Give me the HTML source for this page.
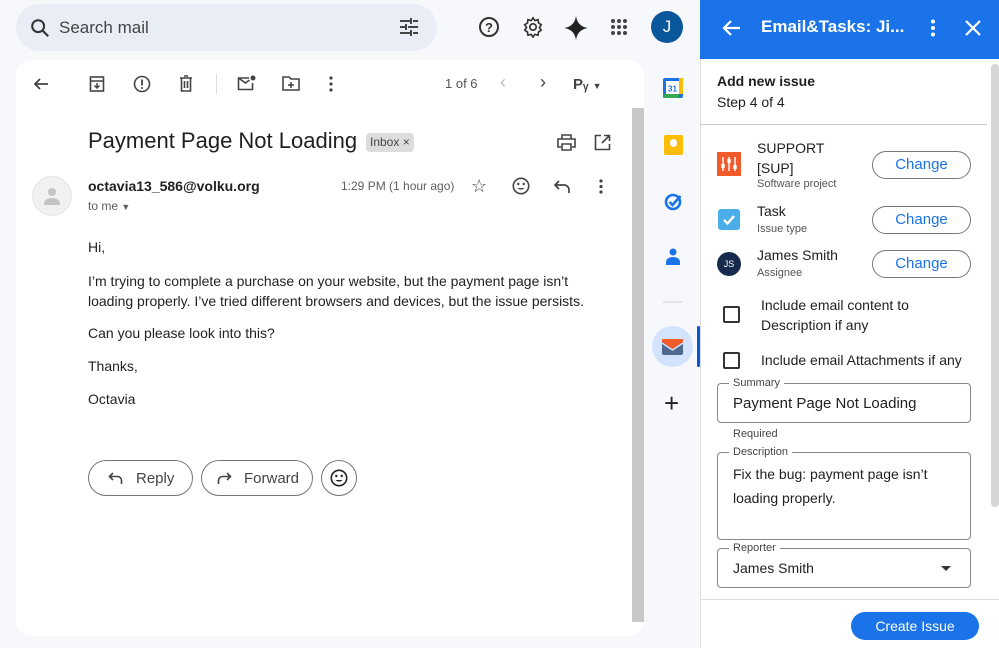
<!DOCTYPE html>
<html><head><meta charset="utf-8"><style>
*{box-sizing:border-box;margin:0;padding:0}
body{width:999px;height:648px;overflow:hidden;background:#f6f8fc;font-family:"Liberation Sans",Arial,sans-serif;position:relative;color:#1f1f1f}
.abs{position:absolute}
svg{display:block}
.ico{position:absolute}
.body p{font-size:14px;color:#222;line-height:20px}
.btn{position:absolute;border:1px solid #747775;border-radius:18px;height:36px;font-size:15px;color:#444;display:flex;align-items:center}
.chg{position:absolute;left:872px;width:99px;height:28px;border:1px solid #777;border-radius:14px;color:#1a73e8;font-size:15px;text-align:center;line-height:26px}
.fld{position:absolute;left:717px;width:254px;border:1px solid #888;border-radius:4px}
.fld .lb{position:absolute;top:-7px;left:11px;background:#fff;padding:0 4px;font-size:11px;color:#444;line-height:12px}
.fld .v{position:absolute;left:15px;font-size:15px;color:#222}
.cb{position:absolute;left:723px;width:17px;height:17px;border:2px solid #333;border-radius:2px}
</style></head><body>
<!-- search -->
<div class="abs" style="left:16px;top:4px;width:421px;height:47px;border-radius:24px;background:#e9eef6"></div>
<svg class="ico" style="left:29px;top:17px" width="22" height="22" viewBox="0 0 24 24"><circle cx="10" cy="10" r="6.5" fill="none" stroke="#333" stroke-width="2.2"/><path d="M15 15l6 6" stroke="#333" stroke-width="2.4"/></svg>
<div class="abs" style="left:59px;top:18px;font-size:17px;color:#444">Search mail</div>
<svg class="ico" style="left:398px;top:17px" width="22" height="20" viewBox="0 0 22 20"><path d="M2 4h10M15 4h5M2 10h5M10 10h10M2 16h10M15 16h5M13 1v6M8 7v6M13 13v6" stroke="#444" stroke-width="2"/></svg>
<svg class="ico" style="left:478px;top:16px" width="22" height="22" viewBox="0 0 22 22"><circle cx="11" cy="11" r="9" fill="none" stroke="#333" stroke-width="2"/><text x="11" y="16" text-anchor="middle" font-size="13" font-weight="bold" fill="#333" font-family="Liberation Sans">?</text></svg>
<svg class="ico" style="left:522px;top:16px" width="22" height="22" viewBox="0 0 24 24"><path d="M12 2l2 3 3.5-1 .5 3.5 3 2-2 3 2 3-3 2-.5 3.5-3.5-1-2 3-2-3-3.5 1-.5-3.5-3-2 2-3-2-3 3-2 .5-3.5 3.5 1z" fill="none" stroke="#333" stroke-width="1.8"/><circle cx="12" cy="12" r="3.5" fill="none" stroke="#333" stroke-width="1.8"/></svg>
<svg class="ico" style="left:564px;top:16px" width="24" height="24" viewBox="0 0 24 24"><path d="M12 0C13 7 17 11 24 12 17 13 13 17 12 24 11 17 7 13 0 12 7 11 11 7 12 0z" fill="#222"/></svg>
<svg class="ico" style="left:610px;top:18px" width="18" height="18" viewBox="0 0 18 18" fill="#444"><circle cx="3" cy="3" r="2"/><circle cx="9" cy="3" r="2"/><circle cx="15" cy="3" r="2"/><circle cx="3" cy="9" r="2"/><circle cx="9" cy="9" r="2"/><circle cx="15" cy="9" r="2"/><circle cx="3" cy="15" r="2"/><circle cx="9" cy="15" r="2"/><circle cx="15" cy="15" r="2"/></svg>
<div class="abs" style="left:651px;top:11px;width:32px;height:32px;border-radius:50%;background:#0b579c;color:#fff;font-size:17px;text-align:center;line-height:32px">J</div>
<!-- card -->
<div class="abs" style="left:16px;top:60px;width:628px;height:576px;background:#fff;border-radius:16px"></div>
<div class="abs" style="left:632px;top:108px;width:12px;height:514px;background:#c8c8c8"></div>
<!-- toolbar -->
<svg class="ico" style="left:32px;top:75px" width="18" height="18" viewBox="0 0 18 18"><path d="M16 9H3M8 4L3 9l5 5" fill="none" stroke="#444" stroke-width="1.8"/></svg>
<svg class="ico" style="left:89px;top:75px" width="16" height="18" viewBox="0 0 16 18"><rect x="1.5" y="2" width="13" height="14" fill="none" stroke="#444" stroke-width="1.6"/><path d="M1.5 6h13M8 8v5M5.5 10.5L8 13l2.5-2.5" fill="none" stroke="#444" stroke-width="1.5"/></svg>
<svg class="ico" style="left:133px;top:75px" width="18" height="18" viewBox="0 0 18 18"><circle cx="9" cy="9" r="7.5" fill="none" stroke="#444" stroke-width="1.6"/><path d="M9 4.5v6" stroke="#444" stroke-width="1.8"/><circle cx="9" cy="13" r="1" fill="#444"/></svg>
<svg class="ico" style="left:179px;top:75px" width="14" height="17" viewBox="0 0 14 17"><path d="M1 3h12M5 1h4M2.5 3v13h9V3M5.5 6v7M8.5 6v7" fill="none" stroke="#444" stroke-width="1.6"/></svg>
<div class="abs" style="left:216px;top:74px;width:1px;height:20px;background:#ddd"></div>
<svg class="ico" style="left:237px;top:75px" width="19" height="16" viewBox="0 0 19 16"><path d="M12 3H1.5v11.5h14V8M1.5 3l7 5 4-3" fill="none" stroke="#444" stroke-width="1.6"/><circle cx="16" cy="3" r="2.5" fill="#444"/></svg>
<svg class="ico" style="left:282px;top:76px" width="18" height="15" viewBox="0 0 18 15"><path d="M1 1h6l2 2h8v11H1z M9 6v6M6 9h6" fill="none" stroke="#444" stroke-width="1.6"/></svg>
<svg class="ico" style="left:329px;top:76px" width="4" height="16" viewBox="0 0 4 16" fill="#444"><circle cx="2" cy="2" r="1.6"/><circle cx="2" cy="8" r="1.6"/><circle cx="2" cy="14" r="1.6"/></svg>
<div class="abs" style="left:445px;top:76px;font-size:13px;color:#555">1 of 6</div>
<div class="abs" style="left:500px;top:72px;font-size:18px;color:#bbb">‹</div>
<div class="abs" style="left:540px;top:72px;font-size:18px;color:#444">›</div>
<div class="abs" style="left:573px;top:76px;font-size:15px;color:#444;font-weight:bold">Pᵧ <span style="font-size:9px">▼</span></div>
<!-- subject -->
<div class="abs" style="left:88px;top:128px;font-size:22px;color:#1f1f1f">Payment Page Not Loading</div>
<div class="abs" style="left:366px;top:133px;height:19px;padding:0 4px;background:#ddd;border-radius:4px;font-size:12px;color:#444;line-height:19px">Inbox ×</div>
<svg class="ico" style="left:557px;top:134px" width="19" height="17" viewBox="0 0 19 17"><path d="M5 5V1h9v4M4 13H1V5h17v8h-3M5 10h9v6H5z" fill="none" stroke="#444" stroke-width="1.6"/></svg>
<svg class="ico" style="left:594px;top:134px" width="17" height="17" viewBox="0 0 17 17"><path d="M7 1.5H1.5v14h14V10M10 1.5h5.5V7M15.5 1.5L8 9" fill="none" stroke="#444" stroke-width="1.6"/></svg>
<!-- sender -->
<div class="abs" style="left:32px;top:176px;width:40px;height:40px;border-radius:50%;background:#f1f1f1;border:1px solid #e6e6e6"></div>
<svg class="ico" style="left:44px;top:187px" width="16" height="18" viewBox="0 0 16 18" fill="#c4c4c4"><circle cx="8" cy="5" r="4"/><path d="M0 18c0-5 3-7 8-7s8 2 8 7z"/></svg>
<div class="abs" style="left:88px;top:178px;font-size:14px;font-weight:bold;color:#1f1f1f">octavia13_586@volku.org</div>
<div class="abs" style="left:88px;top:199px;font-size:12px;color:#5e5e5e">to me <span style="font-size:9px">▼</span></div>
<div class="abs" style="left:341px;top:179px;font-size:12px;color:#5e5e5e">1:29 PM (1 hour ago)</div>
<div class="abs" style="left:471px;top:176px;font-size:18px;color:#444">☆</div>
<svg class="ico" style="left:512px;top:177px" width="18" height="18" viewBox="0 0 18 18"><circle cx="9" cy="9" r="7.7" fill="none" stroke="#444" stroke-width="1.6"/><circle cx="6.3" cy="7" r="1.2" fill="#444"/><circle cx="11.7" cy="7" r="1.2" fill="#444"/><path d="M5.5 11a4 3 0 0 0 7 0z" fill="#444"/></svg>
<svg class="ico" style="left:553px;top:179px" width="18" height="15" viewBox="0 0 18 15"><path d="M6 2L2 6l4 4M2 6h9a5 5 0 0 1 5 5v3" fill="none" stroke="#444" stroke-width="1.7"/></svg>
<svg class="ico" style="left:599px;top:179px" width="4" height="15" viewBox="0 0 4 15" fill="#444"><circle cx="2" cy="2" r="1.6"/><circle cx="2" cy="7.5" r="1.6"/><circle cx="2" cy="13" r="1.6"/></svg>
<!-- body -->
<div class="body">
<p class="abs" style="left:88px;top:237px">Hi,</p>
<p class="abs" style="left:88px;top:271px;width:520px">I’m trying to complete a purchase on your website, but the payment page isn’t loading properly. I’ve tried different browsers and devices, but the issue persists.</p>
<p class="abs" style="left:88px;top:323px">Can you please look into this?</p>
<p class="abs" style="left:88px;top:356px">Thanks,</p>
<p class="abs" style="left:88px;top:389px">Octavia</p>
</div>
<div class="btn" style="left:88px;top:460px;width:105px"><svg style="margin-left:19px" width="16" height="13" viewBox="0 0 16 13"><path d="M5 1L1.5 4.5 5 8M1.5 4.5h8a4 4 0 0 1 4 4v3.5" fill="none" stroke="#444" stroke-width="1.6"/></svg><span style="margin-left:12px">Reply</span></div>
<div class="btn" style="left:201px;top:460px;width:112px"><svg style="margin-left:14px" width="16" height="13" viewBox="0 0 16 13"><path d="M11 1l3.5 3.5L11 8M14.5 4.5h-8a4 4 0 0 0-4 4v3.5" fill="none" stroke="#444" stroke-width="1.6"/></svg><span style="margin-left:12px">Forward</span></div>
<div class="btn" style="left:321px;top:460px;width:36px;justify-content:center"><svg width="18" height="18" viewBox="0 0 18 18"><circle cx="9" cy="9" r="7.7" fill="none" stroke="#222" stroke-width="1.6"/><circle cx="6.3" cy="7" r="1.2" fill="#222"/><circle cx="11.7" cy="7" r="1.2" fill="#222"/><path d="M5.5 11a4 3 0 0 0 7 0z" fill="#222"/></svg></div>
<!-- side rail -->
<svg class="ico" style="left:663px;top:78px" width="20" height="20" viewBox="0 0 20 20"><rect x="0" y="0" width="20" height="20" rx="2" fill="#1a73e8"/><rect x="0" y="16" width="16" height="4" fill="#34a853"/><rect x="16" y="0" width="4" height="16" fill="#fbbc04"/><rect x="3" y="3" width="13" height="13" fill="#fff"/><text x="9.5" y="13.5" text-anchor="middle" font-size="8" fill="#1a73e8" font-family="Liberation Sans" font-weight="bold">31</text></svg>
<div class="abs" style="left:664px;top:135px;width:19px;height:20px;background:#fbbc04;border-radius:2px"></div>
<div class="abs" style="left:670px;top:139px;width:7px;height:8px;background:#fff;border-radius:4px"></div>
<svg class="ico" style="left:664px;top:192px" width="19" height="19" viewBox="0 0 19 19"><circle cx="9" cy="10" r="7" fill="none" stroke="#1a73e8" stroke-width="2.6"/><path d="M5.5 10l3 3 8-9" fill="none" stroke="#1a73e8" stroke-width="2.6"/></svg>
<svg class="ico" style="left:666px;top:248px" width="14" height="17" viewBox="0 0 14 17" fill="#1a73e8"><circle cx="7" cy="4" r="3.5"/><path d="M0 17v-3c0-3 3-5 7-5s7 2 7 5v3z"/></svg>
<div class="abs" style="left:663px;top:301px;width:20px;height:2px;background:#e4e4e4"></div>
<div class="abs" style="left:652px;top:326px;width:41px;height:41px;border-radius:50%;background:#d3e3fd"></div>
<div class="abs" style="left:697px;top:326px;width:3px;height:41px;background:#0b57d0;border-radius:2px"></div>
<svg class="ico" style="left:662px;top:339px" width="21" height="16" viewBox="0 0 21 16"><rect x="0" y="2" width="21" height="14" rx="2" fill="#4f6a8f"/><path d="M0 0h21v3l-10.5 7L0 3z" fill="#f15a2b"/><path d="M0 4l10.5 7L21 4" fill="none" stroke="#d3e3fd" stroke-width="1.5"/></svg>
<div class="abs" style="left:664px;top:388px;font-size:26px;color:#222;line-height:30px">+</div>
<!-- panel -->
<div class="abs" style="left:700px;top:0;width:299px;height:648px;background:#fff;border-left:1px solid #ddd"></div>
<div class="abs" style="left:700px;top:0;width:299px;height:59px;background:#1a73e8"></div>
<svg class="ico" style="left:722px;top:19px" width="19" height="18" viewBox="0 0 19 18"><path d="M18 9H2M9 2L2 9l7 7" fill="none" stroke="#fff" stroke-width="2.2"/></svg>
<div class="abs" style="left:761px;top:17px;font-size:17px;font-weight:bold;color:#fff">Email&amp;Tasks: Ji...</div>
<svg class="ico" style="left:930px;top:19px" width="6" height="18" viewBox="0 0 6 18" fill="#fff"><circle cx="3" cy="2.5" r="2"/><circle cx="3" cy="9" r="2"/><circle cx="3" cy="15.5" r="2"/></svg>
<svg class="ico" style="left:965px;top:20px" width="16" height="16" viewBox="0 0 16 16"><path d="M1 1l14 14M15 1L1 15" stroke="#fff" stroke-width="2.2"/></svg>
<div class="abs" style="left:991px;top:64px;width:8px;height:443px;background:#d6d6d6;border-radius:4px"></div>
<div class="abs" style="left:717px;top:73px;font-size:14px;font-weight:bold;color:#1f1f1f">Add new issue</div>
<div class="abs" style="left:717px;top:94px;font-size:14px;color:#1f1f1f">Step 4 of 4</div>
<div class="abs" style="left:700px;top:124px;width:287px;height:1px;background:#ccc"></div>
<!-- project -->
<svg class="ico" style="left:717px;top:152px" width="24" height="24" viewBox="0 0 24 24"><rect width="24" height="24" fill="#f15a2b"/><path d="M6 5v14M12 5v14M18 5v14" stroke="#fff" stroke-width="1.4"/><rect x="4.3" y="12" width="3.4" height="4" fill="#fff"/><rect x="10.3" y="7" width="3.4" height="4" fill="#fff"/><rect x="16.3" y="13" width="3.4" height="4" fill="#fff"/></svg>
<div class="abs" style="left:757px;top:138px;font-size:14px;line-height:20px;color:#1f1f1f">SUPPORT<br>[SUP]</div>
<div class="abs" style="left:757px;top:178px;font-size:11px;color:#555">Software project</div>
<div class="chg" style="top:151px">Change</div>
<div class="abs" style="left:718px;top:209px;width:22px;height:21px;background:#4baee8;border-radius:3px"></div>
<svg class="ico" style="left:722px;top:213px" width="14" height="13" viewBox="0 0 14 13"><path d="M2 7l3.5 3.5L12 3" fill="none" stroke="#fff" stroke-width="2.4"/></svg>
<div class="abs" style="left:757px;top:203px;font-size:14px;color:#1f1f1f">Task</div>
<div class="abs" style="left:757px;top:223px;font-size:11px;color:#555">Issue type</div>
<div class="chg" style="top:206px">Change</div>
<div class="abs" style="left:717px;top:252px;width:24px;height:24px;border-radius:50%;background:#172b4d;color:#fff;font-size:9px;text-align:center;line-height:24px">JS</div>
<div class="abs" style="left:757px;top:247px;font-size:14px;color:#1f1f1f">James Smith</div>
<div class="abs" style="left:757px;top:267px;font-size:11px;color:#555">Assignee</div>
<div class="chg" style="top:250px">Change</div>
<div class="cb" style="top:306px"></div>
<div class="abs" style="left:761px;top:295px;font-size:14px;line-height:20px;color:#1f1f1f">Include email content to<br>Description if any</div>
<div class="cb" style="top:352px"></div>
<div class="abs" style="left:761px;top:352px;font-size:14px;color:#1f1f1f">Include email Attachments if any</div>
<div class="fld" style="top:383px;height:40px"><div class="lb">Summary</div><div class="v" style="top:11px">Payment Page Not Loading</div></div>
<div class="abs" style="left:733px;top:428px;font-size:11px;color:#444">Required</div>
<div class="fld" style="top:452px;height:88px"><div class="lb">Description</div><div class="v" style="top:9px;line-height:24px;font-size:14px">Fix the bug: payment page isn’t<br>loading properly.</div></div>
<div class="fld" style="top:548px;height:40px"><div class="lb">Reporter</div><div class="v" style="top:11px;font-size:14px">James Smith</div><div class="abs" style="right:19px;top:17px;width:0;height:0;border-left:5px solid transparent;border-right:5px solid transparent;border-top:5px solid #333"></div></div>
<div class="abs" style="left:700px;top:599px;width:299px;height:1px;background:#ddd"></div>
<div class="abs" style="left:851px;top:612px;width:128px;height:28px;border-radius:14px;background:#1a73e8;color:#fff;font-size:14px;text-align:center;line-height:28px">Create Issue</div>
</body></html>
